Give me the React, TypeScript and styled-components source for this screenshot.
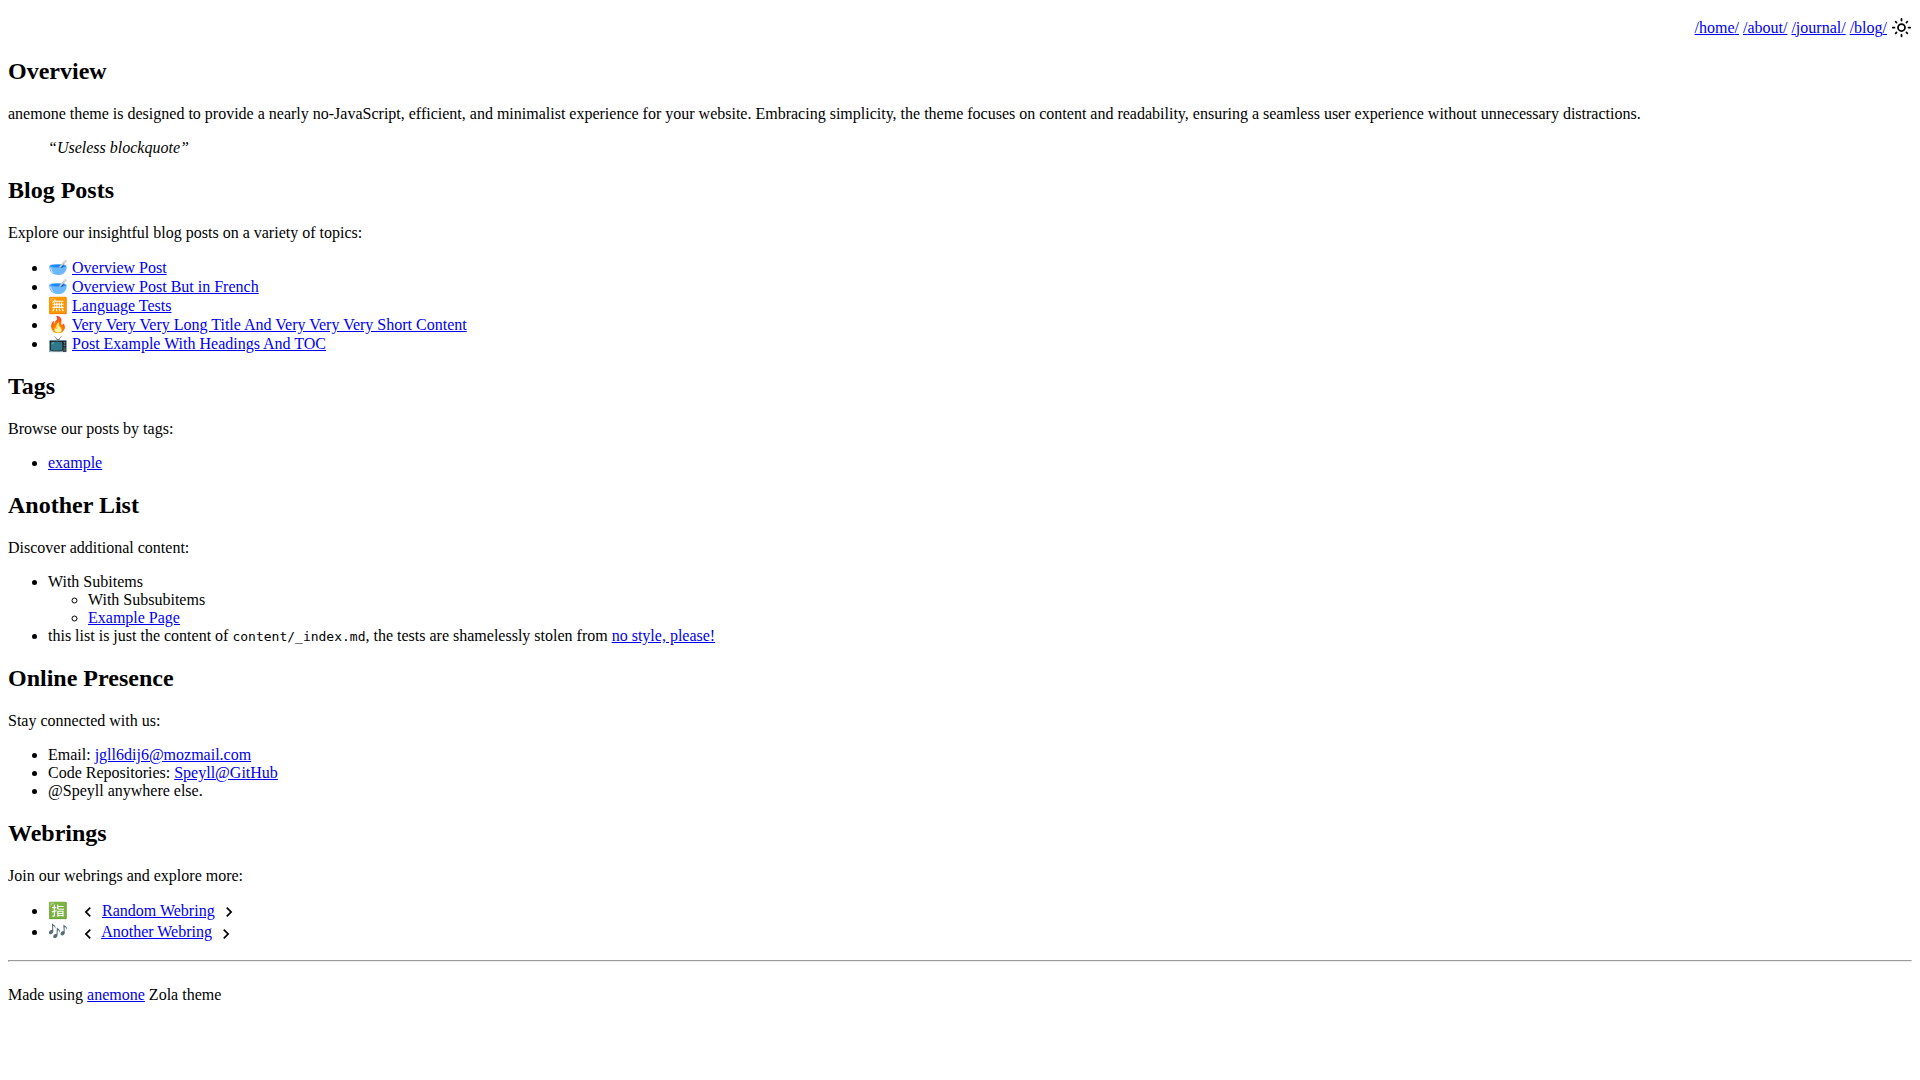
import React from 'react';
import styled, { createGlobalStyle } from 'styled-components';

const Global = createGlobalStyle`
  body { margin: 8px; background: #fff; color: #000; font-family: "Liberation Serif", "Times New Roman", serif; font-size: 16px; }
`;
const Link = styled.a`color: #0000ee; text-decoration: underline;`;
const ArrowLink = styled.a`color: #000; text-decoration: none;`;
const Nav = styled.nav`display: flex; justify-content: flex-end; align-items: center; gap: 4px; padding-top: 9px;`;
const Toggle = styled.button`
  border: 0; padding: 0; background: none; color: inherit; font: inherit; cursor: pointer;
`;
const Sun = styled.svg`display: block; width: 21px; height: 21px;`;
const Chevron = styled.svg`width: 20px; height: 20px; vertical-align: middle;`;
const Heading = styled.h2`font-size: 24px; font-weight: bold; margin: 20px 0;`;
const Text = styled.p`margin: 16px 0;`;
const Quote = styled.blockquote`margin: 16px 40px; font-style: italic;`;
const List = styled.ul`margin: 16px 0; padding-left: 40px; list-style-type: disc;`;
const SubList = styled.ul`margin: 0; padding-left: 40px; list-style-type: circle;`;
const Code = styled.code`font-family: "DejaVu Sans Mono", monospace; font-size: 13px;`;
const RingIcon = styled.span`margin-right: 10px;`;
const Rule = styled.hr`margin: 8px 0;`;
const Credit = styled.p`margin: 24px 0 16px;`;

const posts = [
  ['🥣', 'Overview Post'],
  ['🥣', 'Overview Post But in French'],
  ['🈚', 'Language Tests'],
  ['🔥', 'Very Very Very Long Title And Very Very Very Short Content'],
  ['📺', 'Post Example With Headings And TOC'],
];
const rings = [['🈯', 'Random Webring'], ['🎶', 'Another Webring']];

const LEFT = 'M15.41 7.41L14 6l-6 6 6 6 1.41-1.41L10.83 12z';
const RIGHT = 'M10 6L8.59 7.41 13.17 12l-4.58 4.59L10 18l6-6z';

function Arrow({ d }: { d: string }) {
  return <Chevron viewBox="0 0 24 24" fill="currentColor"><path d={d} /></Chevron>;
}

export default function App() {
  return (
    <>
      <Global />
      <Nav>
        {['home', 'about', 'journal', 'blog'].map((n) => (
          <Link key={n} href={`#${n}`}>/{n}/</Link>
        ))}
        <Toggle aria-label="Toggle theme">
          <Sun viewBox="0 0 24 24" fill="none" stroke="currentColor" strokeWidth="2" strokeLinecap="round">
            <circle cx="12" cy="12" r="4" />
            <path d="M12 2v2M12 20v2M2 12h2M20 12h2M5.3 5.3l1 1M17.7 17.7l1 1M5.3 18.7l1-1M17.7 6.3l1-1" />
          </Sun>
        </Toggle>
      </Nav>
      <main>
        <Heading>Overview</Heading>
        <Text>anemone theme is designed to provide a nearly no-JavaScript, efficient, and minimalist experience for your website. Embracing simplicity, the theme focuses on content and readability, ensuring a seamless user experience without unnecessary distractions.</Text>
        <Quote>“Useless blockquote”</Quote>
        <Heading>Blog Posts</Heading>
        <Text>Explore our insightful blog posts on a variety of topics:</Text>
        <List>{posts.map(([e, t]) => <li key={t}>{e} <Link href="#post">{t}</Link></li>)}</List>
        <Heading>Tags</Heading>
        <Text>Browse our posts by tags:</Text>
        <List><li><Link href="#example">example</Link></li></List>
        <Heading>Another List</Heading>
        <Text>Discover additional content:</Text>
        <List>
          <li>With Subitems
            <SubList><li>With Subsubitems</li><li><Link href="#page">Example Page</Link></li></SubList>
          </li>
          <li>this list is just the content of <Code>content/_index.md</Code>, the tests are shamelessly stolen from <Link href="#no-style">no style, please!</Link></li>
        </List>
        <Heading>Online Presence</Heading>
        <Text>Stay connected with us:</Text>
        <List>
          <li>Email: <Link href="mailto:jgll6dij6@mozmail.com">jgll6dij6@mozmail.com</Link></li>
          <li>Code Repositories: <Link href="#github">Speyll@GitHub</Link></li>
          <li>@Speyll anywhere else.</li>
        </List>
        <Heading>Webrings</Heading>
        <Text>Join our webrings and explore more:</Text>
        <List>
          {rings.map(([e, t]) => (
            <li key={t}><RingIcon>{e}</RingIcon><ArrowLink href="#prev" aria-label="Previous"><Arrow d={LEFT} /></ArrowLink> <Link href="#ring">{t}</Link> <ArrowLink href="#next" aria-label="Next"><Arrow d={RIGHT} /></ArrowLink></li>
          ))}
        </List>
      </main>
      <footer>
        <Rule />
        <Credit>Made using <Link href="#anemone">anemone</Link> Zola theme</Credit>
      </footer>
    </>
  );
}
